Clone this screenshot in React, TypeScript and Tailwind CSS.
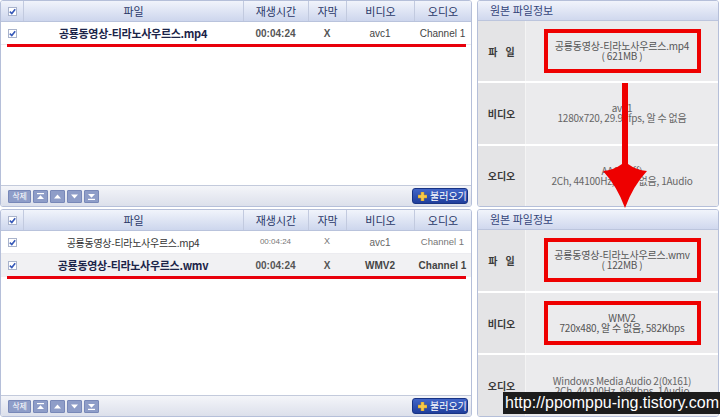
import React from "react";

const ko = "font-['Noto_Sans_CJK_KR','Noto_Sans_CJK_SC',sans-serif]";
const lat = "font-['Liberation_Sans','Noto_Sans_CJK_KR',sans-serif]";
const cols = "grid grid-cols-[22px_220px_65px_38px_68px_1fr]";

const Check = () => (
  <span className="inline-flex items-center justify-center w-[9px] h-[9px] bg-white border border-[#a9b3cb]">
    <svg width="7" height="7" viewBox="0 0 7 7">
      <path d="M0.8 3.6 L2.8 5.6 L6.2 1.2" stroke="#3658b8" strokeWidth="1.6" fill="none" />
    </svg>
  </span>
);

type Row = {
  name: string;
  time: string;
  sub: string;
  video: string;
  audio: string;
  bold: boolean;
  shaded?: boolean;
};

const HeaderCell = ({ children, first }: { children?: React.ReactNode; first?: boolean }) => (
  <div
    className={
      first
        ? "flex items-center justify-center"
        : "flex items-center justify-center border-l border-[#c2cadf]"
    }
  >
    {children}
  </div>
);

const TableRow = ({ row }: { row: Row }) => (
  <div
    className={
      row.shaded
        ? `${cols} h-[23px] bg-[#f1f1f3] items-center`
        : `${cols} h-[23px] bg-white items-center border-b border-[#ececf0]`
    }
  >
    <div className="flex items-center justify-center">
      <Check />
    </div>
    {row.bold ? (
      <>
        <div className={`${ko} text-center text-[11px] font-bold text-[#1b2448] tracking-[-0.3px]`}>{row.name}</div>
        <div className={`${lat} text-center text-[10px] font-bold text-[#555]`}>{row.time}</div>
        <div className={`${lat} text-center text-[10px] font-bold text-[#555]`}>{row.sub}</div>
        <div className={`${lat} text-center text-[10px] text-[#444] ${row.video === "WMV2" ? "font-bold" : ""}`}>{row.video}</div>
        <div className={`${lat} text-center text-[10px] text-[#444] ${row.shaded ? "font-bold" : ""}`}>{row.audio}</div>
      </>
    ) : (
      <>
        <div className={`${ko} text-center text-[10px] text-[#333] tracking-[-0.3px]`}>{row.name}</div>
        <div className={`${lat} text-center text-[8px] text-[#777]`}>{row.time}</div>
        <div className={`${lat} text-center text-[9px] text-[#777]`}>{row.sub}</div>
        <div className={`${lat} text-center text-[10px] text-[#666]`}>{row.video}</div>
        <div className={`${lat} text-center text-[9.5px] text-[#777]`}>{row.audio}</div>
      </>
    )}
  </div>
);

const ArrowBtn = ({ dir, bar }: { dir: "up" | "down"; bar?: boolean }) => (
  <span className="inline-flex items-center justify-center w-[15px] h-[13px] bg-[#8e9dc8] border border-[#7888b8] rounded-[1px]">
    <svg width="9" height="7" viewBox="0 0 9 7">
      {dir === "up" ? (
        <>
          {bar && <rect x="1" y="0" width="7" height="1.2" fill="#fff" />}
          <path d={bar ? "M1 6 L4.5 2.2 L8 6 Z" : "M1 5.5 L4.5 1.5 L8 5.5 Z"} fill="#fff" />
        </>
      ) : (
        <>
          <path d={bar ? "M1 1 L4.5 4.8 L8 1 Z" : "M1 1.5 L4.5 5.5 L8 1.5 Z"} fill="#fff" />
          {bar && <rect x="1" y="5.8" width="7" height="1.2" fill="#fff" />}
        </>
      )}
    </svg>
  </span>
);

const Footer = () => (
  <div className="h-[21px] shrink-0 border-t border-[#c3cadc] bg-linear-to-b from-[#f4f5f9] to-[#dce0eb] flex items-center justify-between pl-[7px] pr-[3px]">
    <div className="flex items-center gap-[2px]">
      <span className={`${ko} inline-flex items-center justify-center w-[23px] h-[13px] bg-[#8e9dc8] border border-[#7888b8] rounded-[1px] text-[8px] leading-none text-white`}>
        삭제
      </span>
      <ArrowBtn dir="up" bar />
      <ArrowBtn dir="up" />
      <ArrowBtn dir="down" />
      <ArrowBtn dir="down" bar />
    </div>
    <span className={`${ko} inline-flex items-center gap-[3px] h-[16px] w-[56px] pl-[5px] rounded-[3px] border border-[#183384] bg-linear-to-b from-[#4366c8] to-[#1f3e9c] text-[10px] leading-none text-white whitespace-nowrap`}>
      <svg width="9" height="9" viewBox="0 0 9 9" className="shrink-0">
        <path d="M3 0 H6 V3 H9 V6 H6 V9 H3 V6 H0 V3 H3 Z" fill="#f6c94a" stroke="#c8901a" strokeWidth="0.5" />
      </svg>
      불러오기
    </span>
  </div>
);

const FileTable = ({ rows }: { rows: Row[] }) => (
  <div className="w-[472px] shrink-0 border border-[#b5bfd9] rounded-[3px] flex flex-col overflow-hidden bg-white">
    <div className={`${cols} ${ko} h-[21px] shrink-0 bg-linear-to-b from-[#f1f4fb] to-[#cdd6ed] border-b border-[#b9c3dc] text-[11px] text-[#2a3868]`}>
      <HeaderCell first>
        <Check />
      </HeaderCell>
      <HeaderCell>파일</HeaderCell>
      <HeaderCell>재생시간</HeaderCell>
      <HeaderCell>자막</HeaderCell>
      <HeaderCell>비디오</HeaderCell>
      <HeaderCell>오디오</HeaderCell>
    </div>
    <div className="flex-1 flex flex-col">
      {rows.map((r) => (
        <TableRow key={r.name} row={r} />
      ))}
      <div className="ml-[6px] mr-[5px] h-[3px] bg-[#e8000b] -mt-[1px]" />
    </div>
    <Footer />
  </div>
);

type Info = { lines: string[]; boxed: boolean };

const InfoRow = ({ label, info, first }: { label: React.ReactNode; info: Info; first?: boolean }) => (
  <div className={first ? "flex-1 flex" : "flex-1 flex border-t-2 border-white"}>
    <div className={`${ko} w-[48px] shrink-0 bg-[#e4e4e6] border-r border-[#f4f4f4] flex items-center justify-center text-[10px] font-bold text-[#3a3a3a]`}>
      {label}
    </div>
    <div className="flex-1 bg-[#ebebed] flex items-center justify-center">
      <div
        className={
          info.boxed
            ? `${ko} w-[157px] h-[44px] border-4 border-[#ee0000] flex flex-col items-center justify-center text-[10px] leading-[10px] text-[#555] tracking-[-0.2px]`
            : `${ko} w-[157px] h-[44px] flex flex-col items-center justify-center text-[10px] leading-[10px] text-[#666] tracking-[-0.2px] whitespace-nowrap`
        }
      >
        {info.lines.map((l) => (
          <span key={l}>{l}</span>
        ))}
      </div>
    </div>
  </div>
);

const InfoPanel = ({ file, video, audio }: { file: Info; video: Info; audio: Info }) => (
  <div className="flex-1 border border-[#b5bfd9] rounded-[3px] flex flex-col overflow-hidden">
    <div className={`${ko} h-[20px] shrink-0 bg-linear-to-b from-[#f1f4fb] to-[#d0d8ee] border-b border-[#bcc5dd] flex items-center pl-[12px] text-[11px] text-[#34447a]`}>
      원본 파일정보
    </div>
    <div className="flex-1 flex flex-col">
      <InfoRow
        first
        label={
          <span className="flex gap-[8px]">
            <span>파</span>
            <span>일</span>
          </span>
        }
        info={file}
      />
      <InfoRow label="비디오" info={video} />
      <InfoRow label="오디오" info={audio} />
    </div>
  </div>
);

export default function App() {
  return (
    <div className="relative w-[720px] h-[417px] overflow-hidden bg-white flex flex-col gap-[2px]">
      <div className="h-[207px] flex gap-[5px] pr-[1px]">
        <FileTable
          rows={[
            { name: "공룡동영상-티라노사우르스.mp4", time: "00:04:24", sub: "X", video: "avc1", audio: "Channel 1", bold: true },
          ]}
        />
        <InfoPanel
          file={{ lines: ["공룡동영상-티라노사우르스.mp4", "( 621MB )"], boxed: true }}
          video={{ lines: ["avc1", "1280x720, 29.97fps, 알 수 없음"], boxed: false }}
          audio={{ lines: ["AAC(0xff)", "2Ch, 44100Hz, 알 수 없음, 1Audio"], boxed: false }}
        />
      </div>
      <div className="h-[208px] flex gap-[5px] pr-[1px]">
        <FileTable
          rows={[
            { name: "공룡동영상-티라노사우르스.mp4", time: "00:04:24", sub: "X", video: "avc1", audio: "Channel 1", bold: false },
            { name: "공룡동영상-티라노사우르스.wmv", time: "00:04:24", sub: "X", video: "WMV2", audio: "Channel 1", bold: true, shaded: true },
          ]}
        />
        <InfoPanel
          file={{ lines: ["공룡동영상-티라노사우르스.wmv", "( 122MB )"], boxed: true }}
          video={{ lines: ["WMV2", "720x480, 알 수 없음, 582Kbps"], boxed: true }}
          audio={{ lines: ["Windows Media Audio 2(0x161)", "2Ch, 44100Hz, 96Kbps, 1Audio"], boxed: false }}
        />
      </div>

      <svg className="absolute inset-0 pointer-events-none" width="720" height="417" viewBox="0 0 720 417">
        <path
          d="M622 83 L628 83 L628 164 Q636 170 647 171 Q633 186 625 208 Q617 186 603 171 Q614 170 622 164 Z"
          fill="#ee0000"
        />
      </svg>

      <div className={`${lat} absolute left-[503px] top-[392px] w-[217px] h-[22px] bg-[#1c1c1c] text-white text-[16px] leading-[22px] pl-[2px] whitespace-nowrap`}>
        http://ppomppu-ing.tistory.com
      </div>
    </div>
  );
}
